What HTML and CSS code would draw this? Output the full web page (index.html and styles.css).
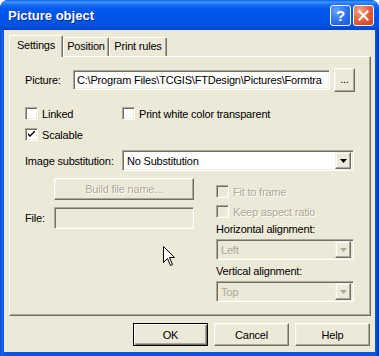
FILE: index.html
```html
<!DOCTYPE html>
<html lang="en">
<head>
    <meta charset="UTF-8">
    <title>Picture object</title>
    <link rel="stylesheet" href="styles.css">
</head>
<body>
    <div class="window">
        <div class="titlebar">
            <span class="title">Picture object</span>
            <div class="caption-btns">
                <span class="cap-btn help">?</span>
                <span class="cap-btn close">
                    <svg width="11" height="11" viewBox="0 0 11 11"><path d="M1.5 1.5 L9.5 9.5 M9.5 1.5 L1.5 9.5" stroke="#fff" stroke-width="2" stroke-linecap="square"/></svg>
                </span>
            </div>
        </div>
        <div class="client">
            <div class="tabs">
                <div class="tab active">Settings</div>
                <div class="tab tab-position">Position</div>
                <div class="tab tab-print">Print rules</div>
            </div>
            <div class="panel">
                <div class="row picture-row">
                    <span class="lbl lbl-picture">Picture:</span>
                    <div class="edit picture-edit">C:\Program Files\TCGIS\FTDesign\Pictures\Formtra</div>
                    <div class="btn dots">...</div>
                </div>

                <div class="row check-row first">
                    <div class="check linked"><span class="box"></span>Linked</div>
                    <div class="check"><span class="box"></span>Print white color transparent</div>
                </div>
                <div class="row check-row second">
                    <div class="check">
                        <span class="box">
                            <svg width="7" height="7" viewBox="0 0 7 7"><path d="M0 2 L0 4 L2 6 L7 1 L7 -1 L2 4 Z" fill="#000"/></svg>
                        </span>Scalable
                    </div>
                </div>

                <div class="row subst-row">
                    <span class="lbl lbl-subst">Image substitution:</span>
                    <div class="combo subst-combo">
                        <span class="combo-text">No Substitution</span>
                        <span class="drop"><svg width="7" height="4" viewBox="0 0 7 4"><path d="M0 0 H7 L3.5 4 Z" fill="#000"/></svg></span>
                    </div>
                </div>

                <div class="lower">
                    <div class="left-col">
                        <div class="btn build disabled">Build file name...</div>
                        <div class="row file-row">
                            <span class="lbl lbl-file">File:</span>
                            <div class="edit file-edit disabled"></div>
                        </div>
                    </div>
                    <div class="right-col">
                        <div class="check disabled fit"><span class="box"></span>Fit to frame</div>
                        <div class="check disabled keep"><span class="box"></span>Keep aspect ratio</div>
                        <div class="caption h-caption">Horizontal alignment:</div>
                        <div class="combo disabled align-combo">
                            <span class="combo-text">Left</span>
                            <span class="drop"><svg width="7" height="4" viewBox="0 0 7 4"><path d="M0 0 H7 L3.5 4 Z" fill="#aca899"/></svg></span>
                        </div>
                        <div class="caption v-caption">Vertical alignment:</div>
                        <div class="combo disabled align-combo">
                            <span class="combo-text">Top</span>
                            <span class="drop"><svg width="7" height="4" viewBox="0 0 7 4"><path d="M0 0 H7 L3.5 4 Z" fill="#aca899"/></svg></span>
                        </div>
                    </div>
                </div>
            </div>
            <div class="footer">
                <div class="btn push default">OK</div>
                <div class="btn push">Cancel</div>
                <div class="btn push">Help</div>
            </div>
        </div>

        <!-- mouse pointer over the dialog -->
        <svg class="pointer" width="12" height="20" viewBox="0 0 12 20">
            <path d="M0.5 0.5 L0.5 16.5 L4.5 12.5 L7.5 19.5 L9.5 18.5 L6.5 11.5 L11.5 11.5 Z" fill="#fff" stroke="#000" stroke-width="1"/>
        </svg>
    </div>
</body>
</html>
```

FILE: styles.css
```css
* {
    box-sizing: border-box;
}
body {
    margin: 0;
    font-family: "Liberation Sans", Arial, sans-serif;
    font-size: 11px;
    letter-spacing: -0.2px;
    color: #000;
    background: #fff;
}
.window {
    position: relative;
    width: 379px;
    height: 356px;
    display: flex;
    flex-direction: column;
    background: linear-gradient(90deg, #0a4fd8 0, #1664ef 2px, #0a55e6 4px, #0a55e6 375px, #0546d0 377px, #0033a8 379px);
    border-radius: 8px 8px 0 0;
    overflow: hidden;
}
.titlebar {
    height: 30px;
    display: flex;
    align-items: center;
    padding: 0 5px 0 8px;
    background: linear-gradient(180deg, #0a5fe8 0, #3d95ff 2px, #1a6cf5 5px, #0058ee 9px, #0055e6 18px, #0052e0 26px, #0046c8 30px);
    border-radius: 8px 8px 0 0;
}
.title {
    flex: 1;
    color: #fff;
    font-weight: bold;
    font-size: 13px;
    letter-spacing: 0;
    text-shadow: 1px 1px #0a2a9c;
    padding-top: 1px;
}
.caption-btns {
    display: flex;
    gap: 2px;
    margin-top: 1px;
}
.cap-btn {
    width: 21px;
    height: 21px;
    border: 1px solid #fff;
    border-radius: 3px;
    display: flex;
    align-items: center;
    justify-content: center;
}
.help {
    background: radial-gradient(circle at 30% 25%, #6ea6ff 0, #2c6ff2 55%, #1a55dc 100%);
    color: #fff;
    font-weight: bold;
    font-size: 15px;
}
.close {
    background: radial-gradient(circle at 30% 25%, #f4a58a 0, #e25c37 55%, #c8421e 100%);
}
.client {
    flex: 1;
    margin: 0 4px 4px 4px;
    padding: 5px 4px 0 5px;
    background: #ece9d8;
}

/* tabs */
.tabs {
    display: flex;
    align-items: flex-end;
    height: 21px;
}
.tab {
    height: 19px;
    border: 1px solid #fff;
    border-right-color: #716f64;
    border-bottom: none;
    border-radius: 2px 2px 0 0;
    box-shadow: inset -1px 0 #aca899;
    text-align: center;
    line-height: 17px;
    background: #ece9d8;
}
.tab.active {
    position: relative;
    z-index: 1;
    width: 54px;
    height: 22px;
    margin-bottom: -1px;
    line-height: 18px;
}
.tab-position {
    width: 46px;
}
.tab-print {
    width: 58px;
}
.panel {
    height: 260px;
    border: 1px solid #fff;
    border-right-color: #716f64;
    border-bottom-color: #716f64;
    box-shadow: inset -1px -1px #aca899;
    padding: 11px 15px 0 15px;
}

/* common controls */
.row {
    display: flex;
    align-items: center;
}
.edit {
    height: 20px;
    background: #fff;
    border: 1px solid;
    border-color: #aca899 #fff #fff #aca899;
    box-shadow: inset 1px 1px #716f64, inset -1px -1px #f1efe2;
    padding: 0 3px;
    line-height: 18px;
    white-space: nowrap;
    overflow: hidden;
}
.edit.disabled {
    background: #ece9d8;
}
.btn {
    display: flex;
    align-items: center;
    justify-content: center;
    background: #ece9d8;
    border: 1px solid;
    border-color: #fff #716f64 #716f64 #fff;
    box-shadow: inset -1px -1px #aca899, inset 1px 1px #f1efe2;
}
.btn.disabled,
.disabled {
    color: #aca899;
    text-shadow: 1px 1px #fff;
}
.btn.default {
    border-color: #000;
    box-shadow: inset 1px 1px #fff, inset -1px -1px #716f64, inset -2px -2px #aca899;
}
.check {
    display: flex;
    align-items: center;
    gap: 4px;
    height: 13px;
    white-space: nowrap;
}
.box {
    width: 13px;
    height: 13px;
    flex: none;
    background: #fff;
    border: 1px solid;
    border-color: #aca899 #fff #fff #aca899;
    box-shadow: inset 1px 1px #716f64, inset -1px -1px #f1efe2;
    display: flex;
    align-items: center;
    justify-content: center;
}
.check.disabled .box {
    background: #ece9d8;
}
.combo {
    height: 21px;
    display: flex;
    align-items: center;
    background: #fff;
    border: 1px solid;
    border-color: #aca899 #fff #fff #aca899;
    box-shadow: inset 1px 1px #716f64, inset -1px -1px #f1efe2;
    padding: 2px 2px 2px 4px;
}
.combo.disabled {
    background: #ece9d8;
}
.combo-text {
    flex: 1;
    white-space: nowrap;
}
.drop {
    width: 16px;
    height: 17px;
    display: flex;
    align-items: center;
    justify-content: center;
    background: #ece9d8;
    border: 1px solid;
    border-color: #f1efe2 #716f64 #716f64 #f1efe2;
    box-shadow: inset -1px -1px #aca899, inset 1px 1px #fff;
}

/* settings page */
.picture-row {
    height: 24px;
}
.lbl-picture {
    width: 48px;
}
.picture-edit {
    width: 257px;
    margin-right: 4px;
}
.dots {
    width: 21px;
    height: 24px;
    padding-bottom: 3px;
}
.check-row.first {
    margin-top: 15px;
}
.check-row.second {
    margin-top: 8px;
}
.linked {
    width: 97px;
}
.subst-row {
    margin-top: 9px;
}
.lbl-subst {
    width: 97px;
}
.subst-combo {
    width: 232px;
}
.lower {
    display: grid;
    grid-template-columns: 169px 139px;
    column-gap: 22px;
    margin-top: 7px;
}
.build {
    width: 140px;
    height: 22px;
    margin-left: 29px;
}
.file-row {
    margin-top: 7px;
}
.lbl-file {
    width: 29px;
}
.file-edit {
    width: 140px;
    height: 22px;
}
.fit {
    margin-top: 7px;
}
.keep {
    margin-top: 7px;
}
.caption {
    line-height: 13px;
}
.h-caption {
    margin-top: 5px;
}
.v-caption {
    margin-top: 5px;
}
.align-combo {
    width: 138px;
    margin-top: 3px;
}
.align-combo .combo-text {
    color: #aca899;
    text-shadow: none;
}

/* dialog buttons */
.footer {
    display: flex;
    justify-content: flex-end;
    gap: 6px;
    margin-top: 7px;
    padding-right: 1px;
}
.push {
    width: 75px;
    height: 23px;
}

.pointer {
    position: absolute;
    left: 163px;
    top: 246px;
}
```
